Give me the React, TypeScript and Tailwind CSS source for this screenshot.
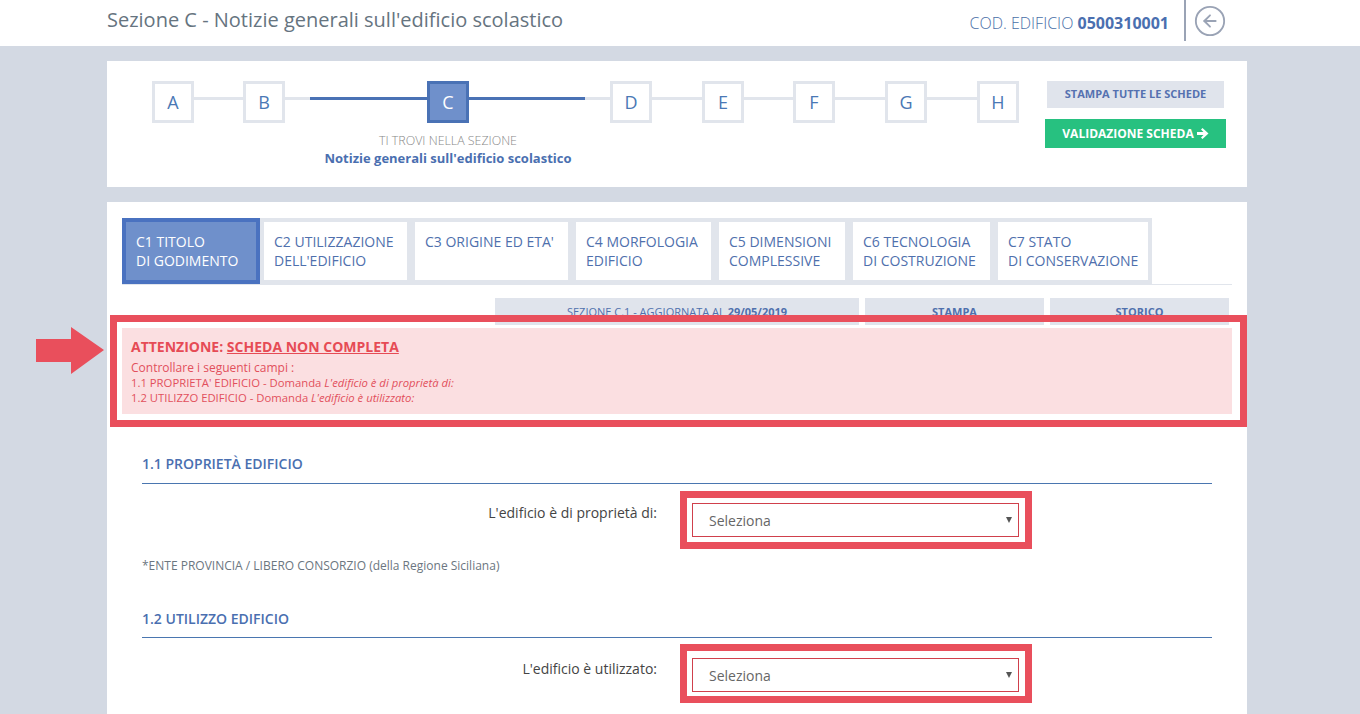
import { CircleArrowLeft } from "lucide-react"

const tabs = [
  { top: "C1 TITOLO", bottom: "DI GODIMENTO", w: "w-[138px]", active: true },
  { top: "C2 UTILIZZAZIONE", bottom: "DELL'EDIFICIO", w: "w-[151px]" },
  { top: "C3 ORIGINE ED ETA'", bottom: "", w: "w-[161px]" },
  { top: "C4 MORFOLOGIA", bottom: "EDIFICIO", w: "w-[143px]" },
  { top: "C5 DIMENSIONI", bottom: "COMPLESSIVE", w: "w-[134px]" },
  { top: "C6 TECNOLOGIA", bottom: "DI COSTRUZIONE", w: "w-[145px]" },
  { top: "C7 STATO", bottom: "DI CONSERVAZIONE", w: "w-[158px]" },
]

function StepBox({ letter, active }: { letter: string; active?: boolean }) {
  return (
    <div
      className={
        active
          ? "flex h-[42px] w-[42px] shrink-0 items-center justify-center border-[3px] border-[#4a72b5] bg-[#6f90cb] text-[18px] text-white"
          : "flex h-[42px] w-[42px] shrink-0 items-center justify-center border-[3px] border-[#e1e5ec] bg-white text-[18px] text-[#4a78b5]"
      }
    >
      {letter}
    </div>
  )
}

function Line({ className }: { className: string }) {
  return <div className={"mt-[16px] h-[3px] shrink-0 " + className} />
}

function Stepper() {
  return (
    <div className="flex items-start">
      <StepBox letter="A" />
      <Line className="w-[49px] bg-[#e1e5ec]" />
      <StepBox letter="B" />
      <Line className="w-[25px] bg-[#e1e5ec]" />
      <Line className="w-[117px] bg-[#4a72b5]" />
      <StepBox letter="C" active />
      <Line className="w-[116px] bg-[#4a72b5]" />
      <Line className="w-[25px] bg-[#e1e5ec]" />
      <StepBox letter="D" />
      <Line className="w-[50px] bg-[#e1e5ec]" />
      <StepBox letter="E" />
      <Line className="w-[49px] bg-[#e1e5ec]" />
      <StepBox letter="F" />
      <Line className="w-[50px] bg-[#e1e5ec]" />
      <StepBox letter="G" />
      <Line className="w-[50px] bg-[#e1e5ec]" />
      <StepBox letter="H" />
    </div>
  )
}

function SelectRow({
  label,
  className,
  labelClass,
  frameClass,
}: {
  label: string
  className: string
  labelClass: string
  frameClass: string
}) {
  return (
    <div className={"flex items-start " + className}>
      <label className={"w-[515px] text-right text-[14px] leading-[20px] text-[#444] " + labelClass}>{label}</label>
      <div className={"ml-[23px] w-[352px] border-[7px] border-[#e94f5c] bg-white pl-[5px] " + frameClass}>
        <div className="flex h-[34px] w-[327px] items-center justify-between border border-[#d0404c] pl-[16px] pr-[6px] text-[14px] text-[#666]">
          <span className="mt-[1px]">Seleziona</span>
          <svg width="6" height="6" viewBox="0 0 6 6">
            <path d="M0 0h6L3 6z" fill="#555" />
          </svg>
        </div>
      </div>
    </div>
  )
}

function SectionTitle({ children, className }: { children: string; className: string }) {
  return (
    <h3 className={"border-b border-[#4a76b0] text-[14px] font-semibold leading-[20px] text-[#4a6fb0] " + className}>
      {children}
    </h3>
  )
}

export default function App() {
  return (
    <div className="relative flex h-[714px] flex-col overflow-hidden bg-[#d3d9e3] font-['Open_Sans',sans-serif]">
      <header className="flex h-[46px] shrink-0 items-start bg-white pl-[107px]">
        <h1 className="mt-[5px] text-[20px] leading-[30px] text-[#66747f]">
          Sezione C - Notizie generali sull'edificio scolastico
        </h1>
        <div className="ml-auto mt-[11px] text-[16px] font-light leading-[24px] text-[#4a6fa8]">
          COD. EDIFICIO <span className="font-bold text-[#4a6fb0]">0500310001</span>
        </div>
        <div className="ml-[15px] h-[41px] w-[2px] bg-[#9aa3b5]" />
        <CircleArrowLeft size={34} strokeWidth={1.3} className="ml-[7px] mr-[133px] mt-[4px] text-[#9aa3b5]" />
      </header>

      <div className="mx-[107px] mt-[15px] flex h-[126px] w-[1140px] shrink-0 bg-white pl-[45px] pt-[20px]">
        <div className="w-[867px]">
          <Stepper />
          <div className="w-[592px] pt-[9px] text-center">
            <p className="text-[12.4px] font-light leading-[18px] text-[#888]">TI TROVI NELLA SEZIONE</p>
            <p className="text-[13px] font-bold leading-[17px] text-[#4a6fb0]">
              Notizie generali sull'edificio scolastico
            </p>
          </div>
        </div>
        <div className="ml-[26px] w-[181px]">
          <button className="mx-[2px] block h-[27px] w-[177px] bg-[#e0e4ec] text-[11px] font-bold text-[#5571b0]">
            STAMPA TUTTE LE SCHEDE
          </button>
          <button className="mt-[11px] flex h-[29px] w-[181px] items-center justify-center gap-[3px] bg-[#27c180] text-[12px] font-bold text-white">
            VALIDAZIONE SCHEDA
            <svg width="12" height="11" viewBox="0 0 12 11" fill="currentColor">
              <path d="M0 4h6.5L4 1.5 5.5 0 11.5 5.5 5.5 11 4 9.5 6.5 7H0z" />
            </svg>
          </button>
        </div>
      </div>

      <main className="mx-[107px] mt-[15px] w-[1140px] flex-1 bg-white pt-[16px]">
        <div className="mx-[15px] flex border-b border-[#e1e5ec]">
          {tabs.map((t) => (
            <div
              key={t.top}
              className={
                t.active
                  ? "h-[66px] shrink-0 border-4 border-[#4a72c0] bg-[#6f90cb] pl-[10px] pt-[10px] text-[14px] leading-[19px] text-white " + t.w
                  : "h-[66px] shrink-0 border-4 border-[#e1e5ec] bg-white pl-[10px] pt-[10px] text-[14px] leading-[19px] text-[#4f70ad] " + t.w
              }
            >
              {t.top}
              <br />
              {t.bottom}
            </div>
          ))}
        </div>

        <div className="mr-[18px] mt-[13px] flex h-[27px] justify-end gap-[6px] text-[11px] leading-[27px] text-[#4f70ad]">
          <div className="w-[364px] bg-[#e0e4ec] text-center">
            SEZIONE C.1 - AGGIORNATA AL <b>29/05/2019</b>
          </div>
          <div className="w-[179px] bg-[#e0e4ec] text-center font-bold">STAMPA</div>
          <div className="w-[179px] bg-[#e0e4ec] text-center font-bold">STORICO</div>
        </div>

        <div className="relative ml-[3px] mt-[-10px] h-[112px] w-[1137px] border-[7px] border-[#e94f5c] pb-[6px] pl-[5px] pr-[8px] pt-[6px]">
          <div className="h-[86px] bg-[#fbdfe1] pl-[9px] pt-[9px] text-[#e2505c]">
            <p className="text-[14px] font-bold leading-[20px] text-[#e64b55]">
              ATTENZIONE: <span className="underline">SCHEDA NON COMPLETA</span>
            </p>
            <p className="mt-[2px] text-[12px] leading-[17px]">Controllare i seguenti campi :</p>
            <p className="text-[11.3px] leading-[14px]">
              1.1 PROPRIETA' EDIFICIO - Domanda <i>L'edificio è di proprietà di:</i>
            </p>
            <p className="text-[11.3px] leading-[15px]">
              1.2 UTILIZZO EDIFICIO - Domanda <i>L'edificio è utilizzato:</i>
            </p>
          </div>
        </div>

        <section className="mx-[35px] pt-[27px]">
          <SectionTitle className="pb-[9px]">1.1 PROPRIETÀ EDIFICIO</SectionTitle>
          <SelectRow
            label="L'edificio è di proprietà di:"
            className="mt-[7px]"
            labelClass="pt-[12px]"
            frameClass="h-[58px] pt-[5px]"
          />
          <p className="mt-[8px] text-[12px] leading-[18px] text-[#6b7680]">
            *ENTE PROVINCIA / LIBERO CONSORZIO (della Regione Siciliana)
          </p>
          <div className="mt-[34px]">
            <SectionTitle className="pb-[8px]">1.2 UTILIZZO EDIFICIO</SectionTitle>
          </div>
          <SelectRow
            label="L'edificio è utilizzato:"
            className="mt-[6px]"
            labelClass="pt-[15px]"
            frameClass="h-[59px] pt-[7px]"
          />
        </section>
      </main>

      <svg width="68" height="47" viewBox="0 0 68 47" className="absolute left-[36px] top-[327px]">
        <path d="M0 12h35V0l33 23-33 24V35H0z" fill="#e94f5c" />
      </svg>
    </div>
  )
}
